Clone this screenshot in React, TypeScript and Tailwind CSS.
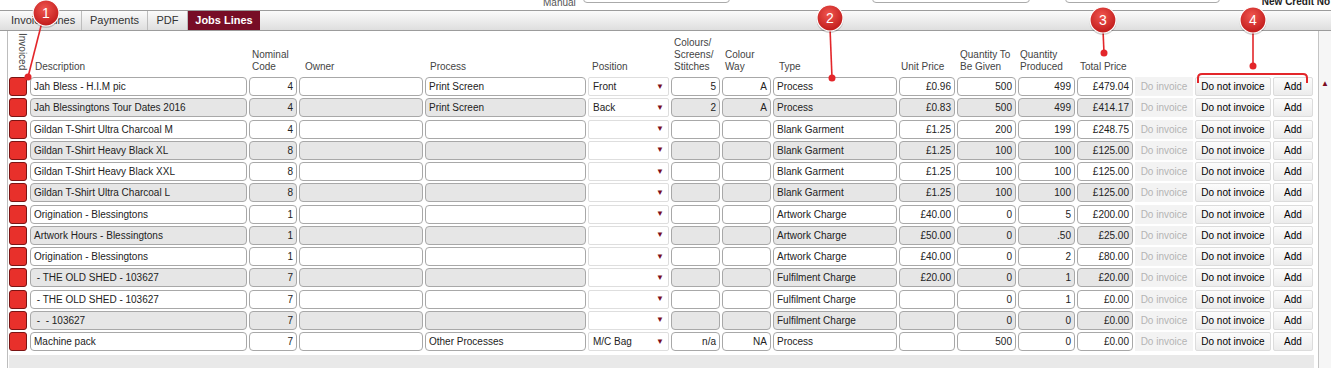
import React from "react";

type Line = {
  desc: string;
  code: string;
  process: string;
  position: string;
  colours: string;
  way: string;
  type: string;
  unit: string;
  given: string;
  produced: string;
  total: string;
};

const lines: Line[] = [
  { desc: "Jah Bless - H.I.M pic", code: "4", process: "Print Screen", position: "Front", colours: "5", way: "A", type: "Process", unit: "£0.96", given: "500", produced: "499", total: "£479.04" },
  { desc: "Jah Blessingtons Tour Dates 2016", code: "4", process: "Print Screen", position: "Back", colours: "2", way: "A", type: "Process", unit: "£0.83", given: "500", produced: "499", total: "£414.17" },
  { desc: "Gildan T-Shirt Ultra Charcoal M", code: "4", process: "", position: "", colours: "", way: "", type: "Blank Garment", unit: "£1.25", given: "200", produced: "199", total: "£248.75" },
  { desc: "Gildan T-Shirt Heavy Black XL", code: "8", process: "", position: "", colours: "", way: "", type: "Blank Garment", unit: "£1.25", given: "100", produced: "100", total: "£125.00" },
  { desc: "Gildan T-Shirt Heavy Black XXL", code: "8", process: "", position: "", colours: "", way: "", type: "Blank Garment", unit: "£1.25", given: "100", produced: "100", total: "£125.00" },
  { desc: "Gildan T-Shirt Ultra Charcoal L", code: "8", process: "", position: "", colours: "", way: "", type: "Blank Garment", unit: "£1.25", given: "100", produced: "100", total: "£125.00" },
  { desc: "Origination - Blessingtons", code: "1", process: "", position: "", colours: "", way: "", type: "Artwork Charge", unit: "£40.00", given: "0", produced: "5", total: "£200.00" },
  { desc: "Artwork Hours - Blessingtons", code: "1", process: "", position: "", colours: "", way: "", type: "Artwork Charge", unit: "£50.00", given: "0", produced: ".50", total: "£25.00" },
  { desc: "Origination - Blessingtons", code: "1", process: "", position: "", colours: "", way: "", type: "Artwork Charge", unit: "£40.00", given: "0", produced: "2", total: "£80.00" },
  { desc: " - THE OLD SHED - 103627", code: "7", process: "", position: "", colours: "", way: "", type: "Fulfilment Charge", unit: "£20.00", given: "0", produced: "1", total: "£20.00" },
  { desc: " - THE OLD SHED - 103627", code: "7", process: "", position: "", colours: "", way: "", type: "Fulfilment Charge", unit: "", given: "0", produced: "1", total: "£0.00" },
  { desc: " -  - 103627", code: "7", process: "", position: "", colours: "", way: "", type: "Fulfilment Charge", unit: "", given: "0", produced: "0", total: "£0.00" },
  { desc: "Machine pack", code: "7", process: "Other Processes", position: "M/C Bag", colours: "n/a", way: "NA", type: "Process", unit: "", given: "500", produced: "0", total: "£0.00" },
];

const Field = ({ value, gray, right }: { value: string; gray: boolean; right?: boolean }) => (
  <div
    className={`h-[19px] rounded-[4px] border border-[#a8a8a8] px-[3px] leading-[17px] whitespace-pre overflow-hidden text-[#222] ${
      gray ? "bg-[#e6e6e6]" : "bg-white"
    } ${right ? "text-right" : "text-left"}`}
  >
    {value}
  </div>
);

const Btn = ({ label }: { label: string }) => (
  <div className="h-[19px] rounded-[2px] border border-[#dcdcdc] bg-gradient-to-b from-[#fcfcfc] to-[#ececec] text-center leading-[17px] text-black">
    {label}
  </div>
);

const cols =
  "grid grid-cols-[19px_217px_48px_124px_161px_81px_49px_49px_124px_56px_59px_57px_56px_58px_76px_40px] gap-x-[2px]";

const Badge = ({ x, y, n }: { x: number; y: number; n: string }) => (
  <g>
    <circle cx={x} cy={y + 1.5} r={13.5} fill="#000" opacity={0.18} />
    <circle cx={x} cy={y} r={13} fill="url(#badge)" stroke="#fff" strokeWidth={1.2} />
    <text x={x} y={y + 5} textAnchor="middle" fontSize="14" fill="#fff" fontFamily="Liberation Sans, sans-serif">
      {n}
    </text>
  </g>
);

const App = () => {
  return (
    <div className="relative w-[1331px] h-[368px] overflow-hidden bg-white text-[10px] font-['Liberation_Sans',Arial,sans-serif]">
      {/* form fields above, cut off */}
      <div className="flex h-[10px] overflow-hidden">
        <div className="ml-[543px] mt-[-5px] text-[#555]">Manual</div>
        <div className="ml-[7px] mt-[-14px] h-[17px] w-[147px] rounded-[4px] border border-[#aaa]" />
        <div className="ml-[142px] mt-[-14px] h-[17px] w-[158px] rounded-[4px] border border-[#aaa]" />
        <div className="ml-[35px] mt-[-14px] h-[17px] w-[155px] rounded-[4px] border border-[#aaa]" />
        <div className="ml-[42px] mt-[-6px] font-bold text-[#222]">New Credit No</div>
      </div>

      {/* tabs */}
      <div className="flex h-[21px] border-y border-[#9c9c9c] bg-gradient-to-b from-[#fbfbfb] to-[#dedede] text-[11px]">
        <div className="w-[82px] border-r border-[#bdbdbd] pl-[11px] leading-[19px] text-[#333]">Invoice Lines</div>
        <div className="w-[66px] border-r border-[#bdbdbd] text-center leading-[19px] text-[#333]">Payments</div>
        <div className="w-[40px] border-r border-[#bdbdbd] text-center leading-[19px] text-[#333]">PDF</div>
        <div className="w-[72px] bg-[#770d26] text-center font-bold leading-[19px] text-white">Jobs Lines</div>
      </div>

      <div className="flex">
        <div className="ml-[7px] flex-1 border-l border-[#bdbdbd] pl-[1px]">
          {/* headings */}
          <div className={`${cols} h-[46px] items-end pb-[4px] leading-[12px] text-[#444]`}>
            <div className="self-start mt-[2px] ml-[1px] h-[38px] [writing-mode:vertical-rl] text-[10px]">Invoiced</div>
            <div className="pl-[5px]">Description</div>
            <div className="pl-[3px]">Nominal<br />Code</div>
            <div className="pl-[6px]">Owner</div>
            <div className="pl-[5px]">Process</div>
            <div className="pl-[4px]">Position</div>
            <div className="pl-[3px]">Colours/<br />Screens/<br />Stitches</div>
            <div className="pl-[3px]">Colour<br />Way</div>
            <div className="pl-[6px]">Type</div>
            <div className="pl-[2px]">Unit Price</div>
            <div className="pl-[3px]">Quantity To<br />Be Given</div>
            <div className="pl-[2px]">Quantity<br />Produced</div>
            <div className="pl-[3px]">Total Price</div>
            <div />
            <div />
            <div />
          </div>

          {/* lines */}
          <div className="pb-[2px]">
            {lines.map((l, i) => {
              const gray = i % 2 === 1;
              return (
                <div key={i} className={`${cols} h-[21.25px] items-start`}>
                  <div className="h-[19px] w-[18px] rounded-[3px] border border-[#7a1414] bg-[#e8302b]" />
                  <Field value={l.desc} gray={gray} />
                  <Field value={l.code} gray={gray} right />
                  <Field value="" gray={gray} />
                  <Field value={l.process} gray={gray} />
                  <div className="flex h-[19px] items-center justify-between rounded-[2px] border border-[#dedede] bg-white pl-[4px] pr-[4px] text-[#222]">
                    <span>{l.position}</span>
                    <span className="text-[8px] text-[#7a0d22]">▼</span>
                  </div>
                  <Field value={l.colours} gray={gray} right />
                  <Field value={l.way} gray={gray} right />
                  <Field value={l.type} gray={gray} />
                  <Field value={l.unit} gray={gray} right />
                  <Field value={l.given} gray={gray} right />
                  <Field value={l.produced} gray={gray} right />
                  <Field value={l.total} gray={gray} right />
                  <div className="h-[19px] bg-[#f3f3f3] text-center leading-[19px] text-[#b4b4b4]">Do invoice</div>
                  <Btn label="Do not invoice" />
                  <Btn label="Add" />
                </div>
              );
            })}
          </div>
          <div className="h-[20px] bg-[#e9e9e9]" />
        </div>

        {/* scrollbar */}
        <div className="ml-[4px] w-[13px] border-l border-[#c4c4c4] bg-[#f6f6f6] pt-[44px] text-center">
          <span className="text-[8px] leading-none text-[#7a0d22]">▲</span>
        </div>
      </div>

      {/* annotations */}
      <svg className="pointer-events-none absolute left-0 top-0" width="1331" height="368">
        <defs>
          <radialGradient id="badge" cx="45%" cy="35%" r="65%">
            <stop offset="0%" stopColor="#f0564f" />
            <stop offset="100%" stopColor="#c01a1a" />
          </radialGradient>
        </defs>
        <g stroke="#e3262a" strokeWidth={1.6} fill="none">
          <line x1={42} y1={22} x2={28} y2={77} />
          <line x1={830} y1={28} x2={832} y2={78} />
          <line x1={1103} y1={30} x2={1104} y2={53} />
          <line x1={1253} y1={30} x2={1253} y2={66} />
          <path d="M1198 83 L1198 78 Q1198 74 1202 74 L1303 74 Q1307 74 1307 78 L1307 83" strokeWidth={2} />
        </g>
        <g fill="#e3262a">
          <circle cx={28} cy={77} r={3.5} />
          <circle cx={832} cy={78} r={3.5} />
          <circle cx={1104} cy={53} r={3.5} />
          <circle cx={1253} cy={66} r={3.5} />
        </g>
        <Badge x={46} y={13} n="1" />
        <Badge x={830} y={18} n="2" />
        <Badge x={1103} y={20} n="3" />
        <Badge x={1253} y={20} n="4" />
      </svg>
    </div>
  );
};

export default App;
